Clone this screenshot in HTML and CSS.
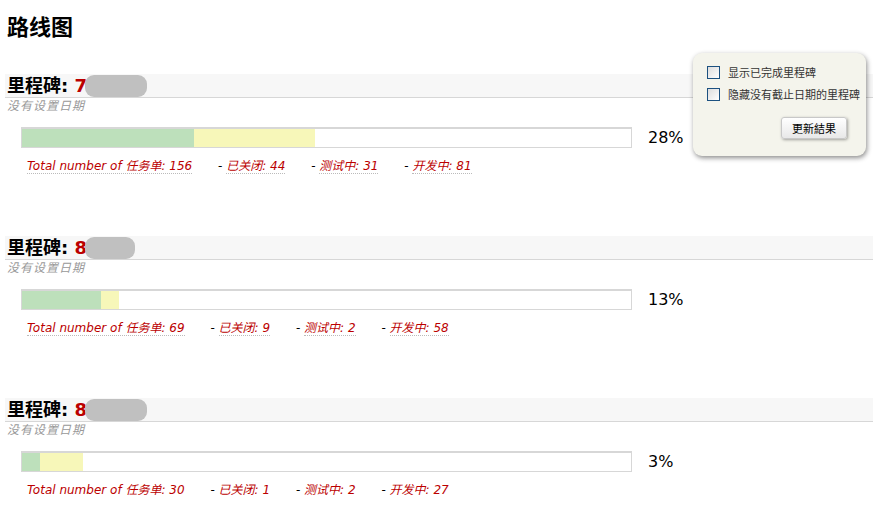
FILE: index.html
```html
<!DOCTYPE html>
<html lang="zh">

<head>
    <meta charset="UTF-8">
    <title>路线图</title>
    <link rel="stylesheet" href="styles.css">
</head>

<body>

    <div class="content">
        <h1>路线图</h1>

        <div class="milestone">
            <h2 class="milestone-head">里程碑: <em>7</em><span class="blur" style="width: 62px;"></span></h2>
            <p class="date">没有设置日期</p>
            <div class="progress-row">
                <div class="progress">
                    <div class="closed" style="width: 28.2%;"></div>
                    <div class="testing" style="width: 19.9%;"></div>
                </div>
                <span class="percent">28%</span>
            </div>
            <p class="stats">
                <a>Total number of 任务单: 156</a>
                <span class="sep">-</span> <a>已关闭: 44</a>
                <span class="sep">-</span> <a>测试中: 31</a>
                <span class="sep">-</span> <a>开发中: 81</a>
            </p>
        </div>

        <div class="milestone">
            <h2 class="milestone-head">里程碑: <em>8</em><span class="blur" style="width: 50px;"></span></h2>
            <p class="date">没有设置日期</p>
            <div class="progress-row">
                <div class="progress">
                    <div class="closed" style="width: 13%;"></div>
                    <div class="testing" style="width: 2.9%;"></div>
                </div>
                <span class="percent">13%</span>
            </div>
            <p class="stats">
                <a>Total number of 任务单: 69</a>
                <span class="sep">-</span> <a>已关闭: 9</a>
                <span class="sep">-</span> <a>测试中: 2</a>
                <span class="sep">-</span> <a>开发中: 58</a>
            </p>
        </div>

        <div class="milestone">
            <h2 class="milestone-head">里程碑: <em>8</em><span class="blur" style="width: 62px;"></span></h2>
            <p class="date">没有设置日期</p>
            <div class="progress-row">
                <div class="progress">
                    <div class="closed" style="width: 3%;"></div>
                    <div class="testing" style="width: 7%;"></div>
                </div>
                <span class="percent">3%</span>
            </div>
            <p class="stats">
                <a>Total number of 任务单: 30</a>
                <span class="sep">-</span> <a>已关闭: 1</a>
                <span class="sep">-</span> <a>测试中: 2</a>
                <span class="sep">-</span> <a>开发中: 27</a>
            </p>
        </div>
    </div>

    <!-- filter options popup -->
    <form class="prefs">
        <label><input type="checkbox"> 显示已完成里程碑</label>
        <label><input type="checkbox"> 隐藏没有截止日期的里程碑</label>
        <div class="buttons">
            <button type="button">更新結果</button>
        </div>
    </form>

</body>

</html>
```

FILE: styles.css
```css
body {
    margin: 0;
    font-family: "DejaVu Sans", Verdana, "Noto Sans CJK SC", sans-serif;
    color: #000;
    background: #fff;
}

.content {
    padding: 0 0 0 5px;
}

h1 {
    margin: 0;
    padding: 14px 0 0 2px;
    height: 74px;
    box-sizing: border-box;
    font-size: 22px;
    line-height: 28px;
    font-weight: bold;
}

.milestone {
    height: 162px;
}

.milestone:last-child {
    height: auto;
}

.milestone-head {
    margin: 0;
    height: 23px;
    padding-left: 2px;
    background-color: #f7f7f7;
    border-bottom: 1px solid #d7d7d7;
    font-size: 18px;
    line-height: 23px;
    font-weight: bold;
}

.milestone-head em {
    font-style: normal;
    color: #b00;
}

.blur {
    display: inline-block;
    height: 22px;
    margin-left: -2px;
    vertical-align: -5px;
    background-color: #c0c0c0;
    border-radius: 9px;
}

.date {
    margin: 1px 0 0 2px;
    font-size: 12px;
    line-height: 15px;
    letter-spacing: 1px;
    font-style: italic;
    color: #999;
}

.progress-row {
    display: flex;
    align-items: center;
    margin: 13px 0 0 16px;
}

.progress {
    display: flex;
    width: 611px;
    height: 21px;
    box-sizing: border-box;
    border: 1px solid #d7d7d7;
    border-top-width: 2px;
    background-color: #fff;
}

.closed {
    background-color: #bde0bb;
}

.testing {
    background-color: #f7f7b9;
}

.percent {
    margin-left: 16px;
    font-size: 16px;
}

.stats {
    margin: 8px 0 0 22px;
    font-size: 12px;
    font-style: italic;
}

.stats a {
    color: #b00;
    border-bottom: 1px dotted #bbb;
}

.stats .sep {
    margin-left: 22px;
    font-style: normal;
}

.prefs {
    position: absolute;
    top: 53px;
    right: 7px;
    width: 173px;
    height: 103px;
    box-sizing: border-box;
    padding: 8px 0 0 14px;
    background-color: #f4f4ec;
    border-radius: 9px;
    box-shadow: 1px 2px 5px rgba(0, 0, 0, 0.45);
    font-size: 11px;
    color: #333;
}

.prefs label {
    display: flex;
    align-items: center;
    gap: 8px;
    height: 22px;
}

.prefs input {
    width: 13px;
    height: 13px;
    margin: 0;
    appearance: none;
    border: 1px solid #1c5180;
    background: linear-gradient(135deg, #ddd, #fff);
}

.buttons {
    text-align: right;
    padding: 12px 19px 0 0;
}

.prefs button {
    padding: 2px 10px;
    font-size: 11px;
    font-family: inherit;
    color: #000;
    background: linear-gradient(#fff, #e8e8e8);
    border: 1px solid #c8c8c8;
    border-radius: 3px;
    box-shadow: 1px 1px 3px rgba(0, 0, 0, 0.35);
}
```
